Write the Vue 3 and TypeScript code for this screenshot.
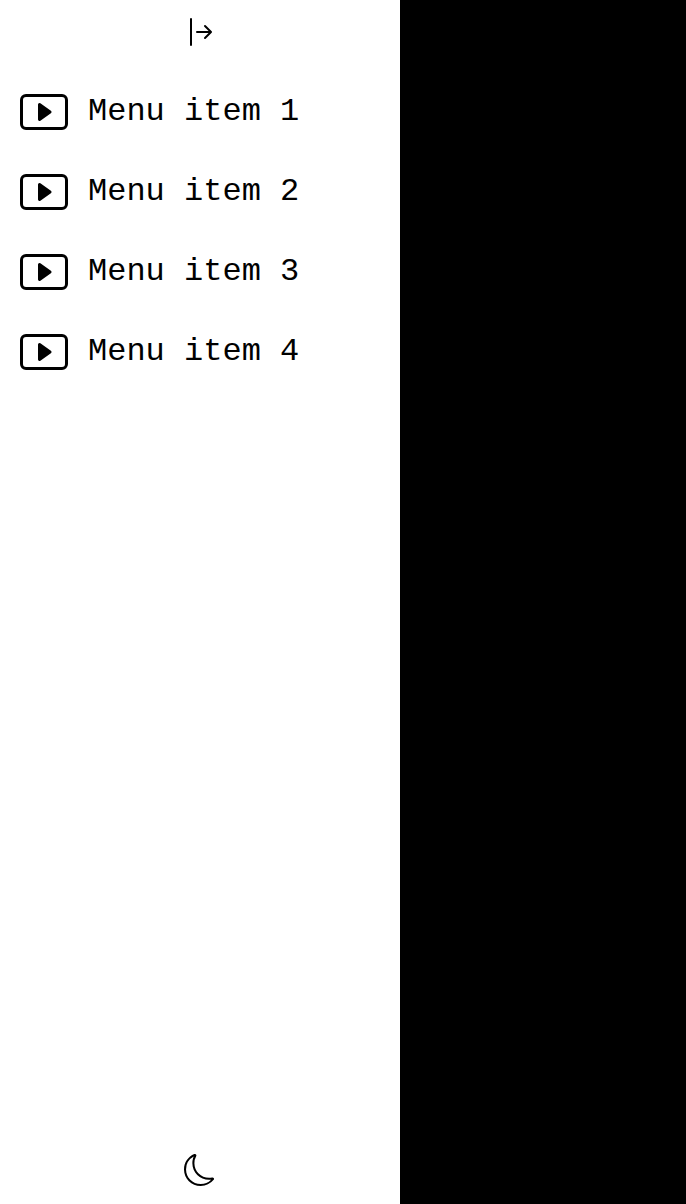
<script setup lang="ts">
interface MenuItem {
  id: number
  label: string
}

const items: MenuItem[] = [1, 2, 3, 4].map((id) => ({ id, label: `Menu item ${id}` }))
</script>

<template>
  <div class="page">
    <aside class="sidebar">
      <button class="icon-button" type="button" aria-label="Toggle sidebar">
        <svg width="32" height="32" viewBox="0 0 16 16" fill="currentColor">
          <path
            fill-rule="evenodd"
            d="M6 8a.5.5 0 0 0 .5.5h5.793l-2.147 2.146a.5.5 0 0 0 .708.708l3-3a.5.5 0 0 0 0-.708l-3-3a.5.5 0 0 0-.708.708L12.293 7.5H6.5A.5.5 0 0 0 6 8zm-2.5 7a.5.5 0 0 1-.5-.5v-13a.5.5 0 0 1 1 0v13a.5.5 0 0 1-.5.5z"
          />
        </svg>
      </button>

      <nav class="menu">
        <a v-for="item in items" :key="item.id" class="menu-item">
          <svg width="48" height="48" viewBox="0 0 16 16" fill="currentColor">
            <path
              d="M6.79 5.093A.5.5 0 0 0 6 5.5v5a.5.5 0 0 0 .79.407l3.5-2.5a.5.5 0 0 0 0-.814l-3.5-2.5z"
            />
            <path
              d="M0 4a2 2 0 0 1 2-2h12a2 2 0 0 1 2 2v8a2 2 0 0 1-2 2H2a2 2 0 0 1-2-2V4zm15 0a1 1 0 0 0-1-1H2a1 1 0 0 0-1 1v8a1 1 0 0 0 1 1h12a1 1 0 0 0 1-1V4z"
            />
          </svg>
          <span class="label">{{ item.label }}</span>
        </a>
      </nav>

      <button class="icon-button theme" type="button" aria-label="Toggle theme">
        <svg width="32" height="32" viewBox="0 0 16 16" fill="currentColor">
          <path
            d="M6 .278a.768.768 0 0 1 .08.858 7.208 7.208 0 0 0-.878 3.46c0 4.021 3.278 7.277 7.318 7.277.527 0 1.04-.055 1.533-.16a.787.787 0 0 1 .81.316.733.733 0 0 1-.031.893A8.349 8.349 0 0 1 8.344 16C3.734 16 0 12.286 0 7.71 0 4.266 2.114 1.312 5.124.06A.752.752 0 0 1 6 .278zM4.858 1.311A7.269 7.269 0 0 0 1.025 7.71c0 4.02 3.279 7.276 7.319 7.276a7.316 7.316 0 0 0 5.205-2.162c-.337.042-.68.063-1.029.063-4.61 0-8.343-3.714-8.343-8.29 0-1.167.242-2.278.681-3.286z"
          />
        </svg>
      </button>
    </aside>
  </div>
</template>

<style scoped>
.page {
  display: flex;
  height: 100vh;
  background: #000;
}

.sidebar {
  display: flex;
  flex-direction: column;
  box-sizing: border-box;
  width: 400px;
  padding: 16px 0 18px;
  background: #fff;
  color: #000;
  font-family: "Liberation Mono", "Courier New", monospace;
}

svg {
  display: block;
  flex: none;
}

.icon-button {
  display: flex;
  justify-content: center;
  padding: 0;
  border: 0;
  background: none;
  color: inherit;
}

.menu {
  display: flex;
  flex-direction: column;
  gap: 32px;
  margin-top: 40px;
  padding: 0 20px;
}

.menu-item {
  display: flex;
  align-items: center;
  gap: 20px;
  height: 48px;
}

.label {
  padding-bottom: 1px;
  font-size: 32px;
  line-height: 37px;
  white-space: pre;
}

.theme {
  margin-top: auto;
}
</style>
